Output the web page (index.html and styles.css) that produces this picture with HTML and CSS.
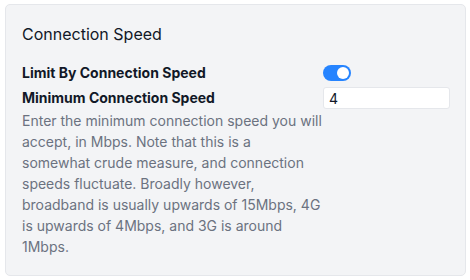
FILE: index.html
```html
<!DOCTYPE html>
<html>
<head>
<meta charset="utf-8">
<link rel="stylesheet" href="styles.css">
</head>
<body>
<section class="card">
  <h2 class="title">Connection Speed</h2>
  <div class="row">
    <label class="label">Limit By Connection Speed</label>
    <div class="control"><span class="toggle"><span class="knob"></span></span></div>
  </div>
  <div class="row">
    <div class="left">
      <label class="label">Minimum Connection Speed</label>
      <p class="desc">Enter the minimum connection speed you will accept, in Mbps. Note that this is a somewhat crude measure, and connection speeds fluctuate. Broadly however, broadband is usually upwards of 15Mbps, 4G is upwards of 4Mbps, and 3G is around 1Mbps.</p>
    </div>
    <div class="control"><input class="input" type="text" value="4"></div>
  </div>
</section>
</body>
</html>
```
FILE: styles.css
```css
html, body { margin: 0; padding: 0; background: #ffffff; }
body { padding: 4px 4px 4px 5px; font-family: Inter, "Noto Sans", sans-serif; }
.card {
  box-sizing: border-box;
  width: 461px;
  height: 272px;
  background: #f3f4f6;
  border: 1px solid #e5e7eb;
  border-radius: 5px;
  padding: 20px 16px 0 16px;
}
.title {
  margin: 0 0 18px 0;
  font-size: 16px;
  font-weight: 400;
  line-height: 18px;
  color: #111827;
}
.row {
  display: grid;
  grid-template-columns: 301px 127px;
  align-items: start;
}
.row + .row { margin-top: 1px; }
.label {
  display: block;
  font-size: 14px;
  font-weight: 700;
  line-height: 24px;
  color: #111827;
}
.control { display: flex; align-items: center; min-height: 24px; }
.toggle {
  display: inline-flex;
  align-items: center;
  justify-content: flex-end;
  box-sizing: border-box;
  width: 28px;
  height: 16px;
  border-radius: 8px;
  background: #2684ff;
  padding: 2px;
}
.knob { width: 12px; height: 12px; border-radius: 50%; background: #fff; }
.input {
  box-sizing: border-box;
  width: 127px;
  height: 22px;
  border: 1px solid #e5e7eb;
  border-radius: 3px;
  background: #fff;
  padding: 0 5px;
  font-family: Inter, sans-serif;
  font-size: 14px;
  color: #111827;
  outline: none;
}
.desc {
  margin: 0;
  width: 300px;
  font-size: 14px;
  line-height: 21px;
  color: #6b7280;
}
```
